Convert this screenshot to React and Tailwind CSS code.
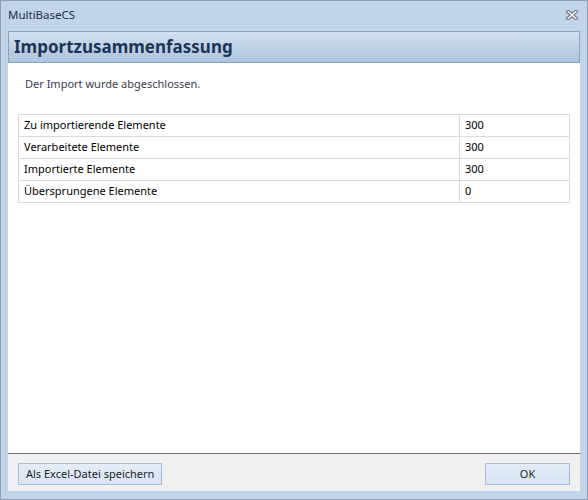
import React from 'react'

const rows = [
  ['Zu importierende Elemente', '300'],
  ['Verarbeitete Elemente', '300'],
  ['Importierte Elemente', '300'],
  ['Übersprungene Elemente', '0'],
]

function CloseGlyph() {
  return (
    <svg width="12" height="10" viewBox="0 0 12 10">
      <path d="M2 1.5 L10 8.5 M10 1.5 L2 8.5" stroke="#6b6f78" strokeWidth="3.6" strokeLinecap="square" />
      <path d="M2 1.5 L10 8.5 M10 1.5 L2 8.5" stroke="#ffffff" strokeWidth="1.4" strokeLinecap="square" />
    </svg>
  )
}

export default function App() {
  return (
    <div
      className="w-[588px] h-[500px] bg-[#c2d4ea] border border-[#8e9db1] flex flex-col text-[11px]"
      style={{ fontFamily: '"Segoe UI", "Noto Sans", "Liberation Sans", sans-serif' }}
    >
      {/* Titlebar */}
      <div className="h-[30px] flex items-center justify-between pl-[7px] pr-[9px] shrink-0">
        <span className="text-[#1e2f48] text-[11.5px] -mt-[2px]">MultiBaseCS</span>
        <span className="-mt-[3px]">
          <CloseGlyph />
        </span>
      </div>

      {/* Client */}
      <div className="flex-1 mx-[7px] mb-[8px] bg-white flex flex-col min-h-0">
        <div className="h-[32px] border border-[#8aa1bf] bg-gradient-to-b from-[#d3e0ef] to-[#aec3df] flex items-center px-[5px] shrink-0">
          <span className="text-[#1c3556] text-[17px] font-bold">Importzusammenfassung</span>
        </div>

        <div className="flex-1 px-[10px] pt-[13px]">
          <div className="pl-[7px] text-[#3c3c50]">Der Import wurde abgeschlossen.</div>

          <div className="mt-[21px] border-l border-t border-[#dadada] w-[552px]">
            {rows.map(([label, value]) => (
              <div key={label} className="flex h-[22px] border-b border-[#dadada]">
                <div className="w-[441px] border-r border-[#dadada] pl-[5px] flex items-center text-black">{label}</div>
                <div className="flex-1 border-r border-[#dadada] pl-[5px] flex items-center text-black">{value}</div>
              </div>
            ))}
          </div>
        </div>

        <div className="h-[38px] border-t border-[#6e6e6e] bg-[#f0f0f0] flex items-start justify-between pt-[9px] px-[10px] shrink-0">
          <button className="h-[22px] px-[7px] border border-[#a7bcd8] bg-gradient-to-b from-[#e4edf8] to-[#d6e4f4] text-[#1e1e1e] text-[11px]">
            Als Excel-Datei speichern
          </button>
          <button className="h-[22px] w-[85px] border border-[#a7bcd8] bg-gradient-to-b from-[#e4edf8] to-[#d6e4f4] text-[#1e1e1e] text-[11px]">
            OK
          </button>
        </div>
      </div>
    </div>
  )
}
